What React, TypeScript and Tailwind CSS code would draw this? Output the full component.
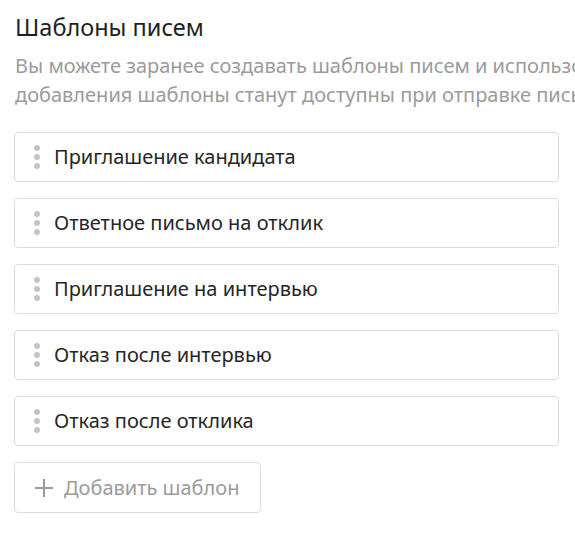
import React from 'react'

const templates = [
  'Приглашение кандидата',
  'Ответное письмо на отклик',
  'Приглашение на интервью',
  'Отказ после интервью',
  'Отказ после отклика',
]

function DragHandle() {
  return (
    <div className="flex flex-col gap-[3px] w-[6px]">
      <span className="block w-[6px] h-[6px] rounded-full bg-[#c4c4c4]" />
      <span className="block w-[6px] h-[6px] rounded-full bg-[#c4c4c4]" />
      <span className="block w-[6px] h-[6px] rounded-full bg-[#c4c4c4]" />
    </div>
  )
}

export default function App() {
  return (
    <div
      className="w-[575px] h-[533px] overflow-hidden bg-white"
      style={{ fontFamily: '"Noto Sans", "Open Sans", sans-serif' }}
    >
      <div className="pl-[15px] pt-[12px]">
        <h1 className="text-[23.5px] leading-[30px] text-[#1f1f1f]">Шаблоны писем</h1>
        <div className="mt-[9px] text-[20px] leading-[29px] text-[#9b9b9b] whitespace-nowrap">
          <div>Вы можете заранее создавать шаблоны писем и использовать их в работе с кандидатами. После</div>
          <div>добавления шаблоны станут доступны при отправке письма кандидату.</div>
        </div>
      </div>

      <div className="mt-[23px] pl-[14px] pr-[16px] flex flex-col gap-[16px]">
        {templates.map((t) => (
          <div
            key={t}
            className="h-[50px] border border-[#dcdcdc] rounded-[4px] flex items-center pl-[19px] gap-[14px]"
          >
            <DragHandle />
            <span className="text-[20px] text-[#262626]">{t}</span>
          </div>
        ))}
        <button className="w-[247px] h-[51px] border border-[#dcdcdc] rounded-[4px] flex items-center pl-[19px] gap-[10px] text-[20px] text-[#9b9b9b]">
          <svg width="20" height="20" viewBox="0 0 20 20" fill="none" stroke="#9b9b9b" strokeWidth="2">
            <path d="M10 1v18M1 10h18" />
          </svg>
          <span>Добавить шаблон</span>
        </button>
      </div>
    </div>
  )
}
